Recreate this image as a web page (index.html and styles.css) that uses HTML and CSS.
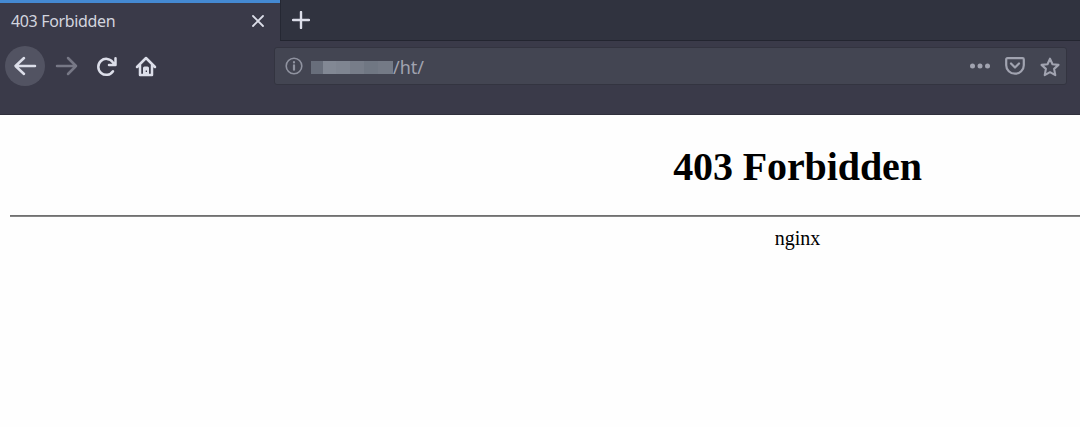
FILE: index.html
```html
<!DOCTYPE html>
<html lang="en">
<head>
<meta charset="utf-8">
<title>403 Forbidden</title>
<link rel="stylesheet" href="styles.css">
</head>
<body>
<header class="chrome">
  <div class="tabs">
    <div class="tab">
      <span class="tab-title">403 Forbidden</span>
      <svg class="close" viewBox="0 0 12 12"><path d="M1 1l10 10M11 1L1 11"/></svg>
    </div>
    <div class="strip">
      <svg class="plus" viewBox="0 0 18 18"><path d="M9 1v16M1 9h16"/></svg>
    </div>
  </div>
  <div class="toolbar">
    <nav class="nav">
      <span class="button back"><svg viewBox="0 0 40 40"><path d="M30 20H11M19 12l-8.500 8 8.500 8"/></svg></span>
      <span class="button forward"><svg viewBox="0 0 40 40"><path d="M11 20h19M22 12l8 8-8 8"/></svg></span>
      <span class="button reload"><svg viewBox="0 0 40 40"><path d="M26 25.200A8 8 0 1 1 25.800 16.200L27.800 18.800M28.500 12.300v6.700h-6.500"/></svg></span>
      <span class="button home"><svg viewBox="0 0 40 40"><path d="M11 21l9-9 9 9M14 19.500V29h12v-9.500"/><path class="solid" fill-rule="evenodd" d="M17 29v-7q0-1.500 1.500-1.500h3q1.500 0 1.500 1.500v7zM19.700 24.500v1.500h1.300v-1.500z"/></svg></span>
    </nav>
    <div class="address">
      <svg class="info" viewBox="0 0 18 18"><circle cx="9" cy="9" r="7.800"/><path class="stem" d="M9 8.300v4.400M9 5.200v.2"/></svg>
      <span class="mask"></span>
      <span class="path">/ht/</span>
      <svg class="dots" viewBox="0 0 20 6"><circle cx="2.500" cy="3" r="2.500"/><circle cx="10" cy="3" r="2.500"/><circle cx="17.500" cy="3" r="2.500"/></svg>
      <svg class="pocket" viewBox="0 0 20 18"><path d="M2.500 1.200h15q1.300 0 1.300 1.300v5.700a8.800 8.500 0 0 1-17.600 0V2.500q0-1.300 1.300-1.300z"/><path d="M6 6.500l4 4 4-4"/></svg>
      <svg class="star" viewBox="0 0 20 20"><path d="M10 1.700l2.500 5.500 6 .7-4.400 4 1.200 6.200L10 15.200l-5.300 2.900 1.200-6.200-4.400-4 6-.7z"/></svg>
    </div>
  </div>
</header>
<main class="viewport">
  <div class="page">
    <h1 class="heading">403 Forbidden</h1>
    <hr class="rule">
    <p class="server">nginx</p>
  </div>
</main>
</body>
</html>
```
FILE: styles.css
```css
* { box-sizing: border-box; }
body {
  margin: 0;
  height: 427px;
  overflow: hidden;
  background: #fefefe;
}
svg {
  display: block;
  flex: none;
  fill: none;
  stroke: currentColor;
  stroke-linecap: round;
  stroke-linejoin: round;
}
.chrome {
  height: 115px;
  background: #3a3a49;
  color: #dcdee9;
  font-family: "Noto Sans", "Open Sans", sans-serif;
  border-bottom: 1px solid #30303c;
}
.tabs { display: flex; height: 41px; }
.tab {
  display: flex;
  align-items: center;
  justify-content: space-between;
  width: 280px;
  padding: 0 16px 2px 11px;
  border-top: 3px solid #4489d2;
}
.tab-title {
  font-size: 16px;
  line-height: 24px;
  letter-spacing: -0.35px;
  color: #d3d5df;
}
.close { width: 12px; height: 12px; stroke-width: 1.8; }
.strip {
  flex: 1;
  padding: 11px 0 0 11px;
  background: #30333f;
  border-left: 1px solid #252833;
  border-bottom: 1px solid #232530;
}
.plus { width: 18px; height: 18px; stroke-width: 2.4; }
.toolbar {
  display: flex;
  padding: 5px 13px 0 5px;
}
.nav { display: flex; width: 269px; }
.button {
  width: 40px;
  height: 40px;
  margin-right: 1px;
  border-radius: 50%;
}
.button svg { width: 40px; height: 40px; stroke-width: 2.5; }
.back { background: #525362; }
.forward { color: #777886; }
.reload { margin-right: 0; }
.home { margin-left: -1px; }
.solid { fill: currentColor; stroke: none; }
.address {
  display: flex;
  align-items: center;
  flex: 1;
  height: 38px;
  margin-top: 1px;
  padding: 0 6px 0 10px;
  background: #434552;
  border: 1px solid #333440;
  border-radius: 3px;
  color: #a1a3b0;
}
.info { width: 18px; height: 18px; stroke-width: 1.6; stroke: #9093a0; }
.stem { stroke-width: 2.2; }
.mask {
  width: 82px;
  height: 13px;
  margin: 3px 0 0 8px;
  background: linear-gradient(90deg, #686e7b 0 12px, #828894 12px 25px, #7f8591 25px 39px, #777d89 39px 53px, #707783 53px 67px, #747a86 67px);
}
.path {
  flex: 1;
  padding-top: 1px;
  font-size: 18px;
  line-height: 26px;
}
.dots { width: 20px; height: 6px; fill: currentColor; stroke: none; margin-right: 15px; }
.pocket { width: 20px; height: 18px; stroke-width: 2.2; margin-right: 15px; }
.star { width: 20px; height: 20px; margin-top: 1px; stroke-width: 2.1; }
.viewport { height: 312px; overflow: hidden; }
.page {
  width: 1585px;
  padding-left: 10px;
  color: #000;
  font-family: "Liberation Serif", serif;
  text-align: center;
}
.heading {
  margin: 0;
  padding-top: 29px;
  font-size: 40px;
  line-height: 46px;
  letter-spacing: -0.1px;
}
.rule {
  height: 2px;
  margin: 25px 0 0;
  border: 0;
  background: linear-gradient(#707070 50%, #858585 50%);
}
.server {
  margin: 0;
  padding-top: 10px;
  font-size: 20px;
  line-height: 23px;
}
```
